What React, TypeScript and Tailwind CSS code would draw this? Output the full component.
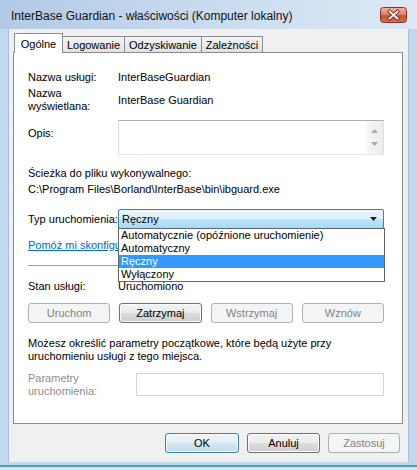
import React from "react";

const btn =
  "flex items-center justify-center rounded-[3px] border h-[20px] whitespace-nowrap";
const btnNormal =
  "border-[#707070] bg-[linear-gradient(#f2f2f2_0%,#ebebeb_50%,#dddddd_50%,#cfcfcf_100%)] text-black shadow-[inset_0_0_0_1px_#fcfcfc]";
const btnDisabled = "border-[#adb2b5] bg-[#f4f4f4] text-[#838383]";

const Tab = ({ label, active, w }: { label: string; active?: boolean; w: string }) => (
  <div
    className={
      active
        ? `${w} h-[20px] bg-white border border-b-0 border-[#898c95] flex items-start justify-center pt-[3px] relative z-20`
        : `${w} h-[16px] mb-[1px] -ml-px border border-b-0 border-[#898c95] bg-[linear-gradient(#f3f3f3,#e2e2e2)] flex items-center justify-center`
    }
  >
    <span className="leading-[14px] whitespace-nowrap">{label}</span>
  </div>
);

const CloseButton = () => (
  <svg width="27" height="16" viewBox="0 0 27 16" className="mt-[7px] shrink-0">
    <defs>
      <linearGradient id="closeFill" x1="0" y1="0" x2="0" y2="1">
        <stop offset="0" stopColor="#f0b4a4" />
        <stop offset="0.45" stopColor="#de8870" />
        <stop offset="0.55" stopColor="#c8502f" />
        <stop offset="1" stopColor="#d7714f" />
      </linearGradient>
    </defs>
    <rect x="0.5" y="0.5" width="26" height="15" rx="3" fill="url(#closeFill)" stroke="#8a3320" />
    <path d="M9.5 4.5 L17.5 11.5 M17.5 4.5 L9.5 11.5" stroke="#6a2416" strokeWidth="3.4" strokeLinecap="square" />
    <path d="M9.5 4.5 L17.5 11.5 M17.5 4.5 L9.5 11.5" stroke="#ffffff" strokeWidth="1.8" strokeLinecap="square" />
  </svg>
);

const options = [
  "Automatycznie (opóźnione uruchomienie)",
  "Automatyczny",
  "Ręczny",
  "Wyłączony",
];

export default function App() {
  return (
    <div className="w-[417px] h-[470px] flex flex-col bg-[#c3d7ee] font-['Liberation_Sans',Arial,sans-serif] text-[11px] text-black overflow-hidden">
      {/* title bar */}
      <div className="h-[29px] flex items-start justify-between pl-[11px] pr-[10px] bg-[linear-gradient(90deg,#b2cae7,#cddef1_60%,#dde8f4)]">
        <span className="mt-[7px] leading-[18px] text-[12px] text-[#111] whitespace-nowrap">
          InterBase Guardian - właściwości (Komputer lokalny)
        </span>
        <CloseButton />
      </div>

      {/* client area */}
      <div className="mx-[8px] h-[433px] bg-[#f0f0f0] border-x border-[#a9bdd6] flex flex-col">
        <div className="pt-[4px] pl-[4px] flex flex-col">
          <div className="flex items-end ml-[1px] -mb-px relative z-10">
            <Tab label="Ogólne" active w="w-[49px]" />
            <Tab label="Logowanie" w="w-[63px]" />
            <Tab label="Odzyskiwanie" w="w-[78px]" />
            <Tab label="Zależności" w="w-[62px]" />
          </div>

          {/* tab panel */}
          <div className="relative w-[390px] h-[372px] bg-white border border-[#898c95] pl-[14px] pr-[18px] flex flex-col">
            <div className="mt-[16px] h-[16px] flex items-center">
              <span className="w-[90px]">Nazwa usługi:</span>
              <span>InterBaseGuardian</span>
            </div>
            <div className="mt-[2px] h-[26px] flex items-center">
              <span className="w-[90px] leading-[13px]">
                Nazwa
                <br />
                wyświetlana:
              </span>
              <span>InterBase Guardian</span>
            </div>
            <div className="mt-[7px] flex items-start">
              <span className="w-[90px] pt-[5px] leading-[16px]">Opis:</span>
              <div className="flex-1 h-[35px] border border-[#abadb3] border-b-[#e3e9ef] border-x-[#dbdfe6] border-t-[#abadb3] flex justify-end">
                <div className="w-[17px] h-full bg-[linear-gradient(90deg,#f7f7f7,#ececec)] flex flex-col items-center justify-center gap-[9px]">
                  <svg width="7" height="4" viewBox="0 0 7 4">
                    <path d="M0 4 L3.5 0 L7 4 Z" fill="#a9a9a9" />
                  </svg>
                  <svg width="7" height="4" viewBox="0 0 7 4">
                    <path d="M0 0 L3.5 4 L7 0 Z" fill="#a9a9a9" />
                  </svg>
                </div>
              </div>
            </div>
            <div className="mt-[10px] h-[16px] flex items-center">Ścieżka do pliku wykonywalnego:</div>
            <div className="h-[16px] flex items-center">C:\Program Files\Borland\InterBase\bin\ibguard.exe</div>

            <div className="mt-[12px] h-[20px] flex items-center">
              <span className="w-[90px] whitespace-nowrap">Typ uruchomienia:</span>
              <div className="flex-1 h-[20px] rounded-[2px] border border-[#3c7fb1] bg-[linear-gradient(#eaf6fd_0%,#d9f0fc_50%,#bee6fd_50%,#a7d9f5_100%)] flex items-center justify-between pl-[3px] pr-[6px]">
                <span>Ręczny</span>
                <svg width="7" height="4" viewBox="0 0 7 4">
                  <path d="M0 0 L3.5 4 L7 0 Z" fill="#1c1c1c" />
                </svg>
              </div>
            </div>

            <div className="mt-[8px] h-[16px] flex items-center whitespace-nowrap">
              <a className="text-[#0066cc] underline">Pomóż mi skonfigurować opcje uruchamiania usługi.</a>
            </div>

            <div className="mt-[12px] h-px bg-[#a0a0a0]" />

            <div className="mt-[12px] h-[16px] flex items-center">
              <span className="w-[90px]">Stan usługi:</span>
              <span>Uruchomiono</span>
            </div>

            <div className="mt-[9px] grid grid-cols-4 gap-[9px]">
              <div className={`${btn} ${btnDisabled}`}>Uruchom</div>
              <div className={`${btn} ${btnNormal}`}>Zatrzymaj</div>
              <div className={`${btn} ${btnDisabled}`}>Wstrzymaj</div>
              <div className={`${btn} ${btnDisabled}`}>Wznów</div>
            </div>

            <p className="mt-[14px] leading-[13px]">
              Możesz określić parametry początkowe, które będą użyte przy
              <br />
              uruchomieniu usługi z tego miejsca.
            </p>

            <div className="mt-[10px] h-[23px] flex items-center">
              <span className="w-[108px] leading-[13px] text-[#8d8d8d]">
                Parametry
                <br />
                uruchomienia:
              </span>
              <div className="flex-1 h-[23px] border border-[#d5d5d5] bg-white" />
            </div>

            {/* open dropdown list */}
            <div className="absolute left-[104px] top-[175px] w-[267px] bg-white border border-[#646464] z-30 flex flex-col">
              {options.map((o) => (
                <div
                  key={o}
                  className={`h-[13px] flex items-center pl-[2px] leading-[13px] whitespace-nowrap ${
                    o === "Ręczny" ? "bg-[#3399ff] text-white" : ""
                  }`}
                >
                  {o}
                </div>
              ))}
            </div>
          </div>
        </div>

        {/* dialog buttons */}
        <div className="mt-[9px] flex justify-end gap-[8px] pr-[8px]">
          <div className={`${btn} w-[74px] border-[#3c7fb1] bg-[linear-gradient(#eef5fa_0%,#e2eef6_50%,#d3e5f1_50%,#c6dcec_100%)] shadow-[inset_0_0_0_1px_#f4fafd]`}>OK</div>
          <div className={`${btn} w-[73px] ${btnNormal}`}>Anuluj</div>
          <div className={`${btn} w-[72px] ${btnDisabled}`}>Zastosuj</div>
        </div>
      </div>

      <div className="h-[3px] bg-[#c3d7ee]" />
      <div className="h-[2px] bg-[#3fa3cc]" />
      <div className="flex-1 bg-[#d5e6f4]" />
    </div>
  );
}
